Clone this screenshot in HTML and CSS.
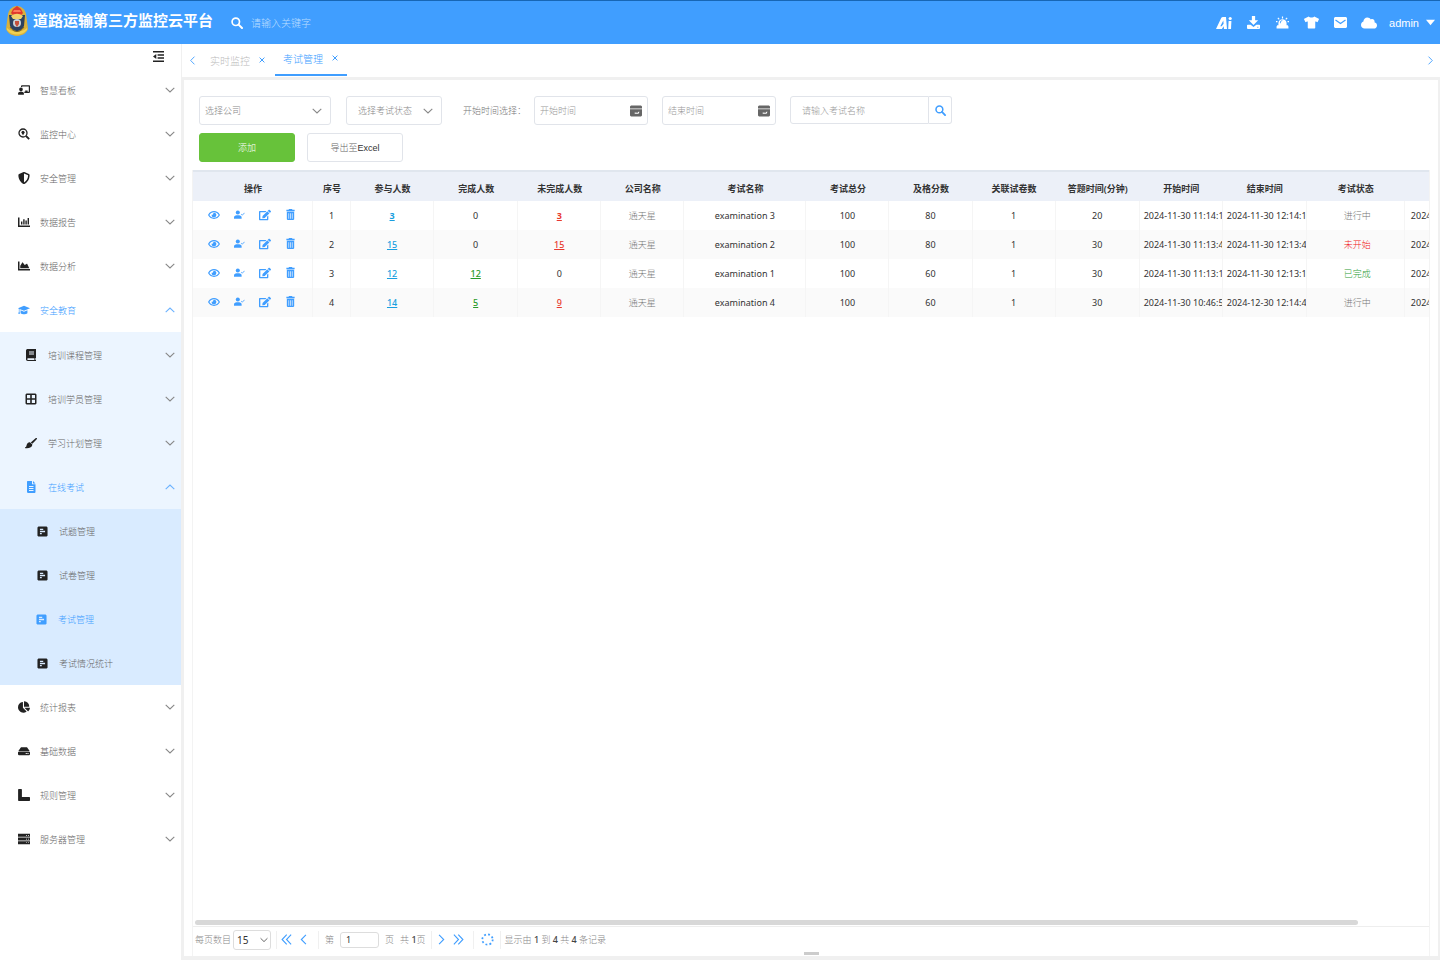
FILE: index.html
```html
<!DOCTYPE html>
<html lang="zh-CN">
<head>
    <meta charset="utf-8">
    <title>道路运输第三方监控云平台</title>
    <link rel="stylesheet" href="styles.css">
</head>
<body>

<svg class="sprite" aria-hidden="true">
    <symbol id="i-down" viewBox="0 0 10 6"><path d="M.7.8 5 5 9.300.8" fill="none" stroke="currentColor" stroke-width="1.100"/></symbol>
    <symbol id="i-left" viewBox="0 0 6 10"><path d="M5.200.7 1 5l4.200 4.300" fill="none" stroke="currentColor"/></symbol>
    <symbol id="i-right" viewBox="0 0 6 10"><path d="M.8.7 5 5 .8 9.300" fill="none" stroke="currentColor"/></symbol>
    <symbol id="i-first" viewBox="0 0 10 10"><path d="M5.200.5 1 5l4.200 4.500M9.200.5 5 5l4.200 4.500" fill="none" stroke="currentColor"/></symbol>
    <symbol id="i-last" viewBox="0 0 10 10"><path d="M.8.5 5 5 .8 9.500M4.800.5 9 5 4.800 9.500" fill="none" stroke="currentColor"/></symbol>
    <symbol id="i-close" viewBox="0 0 6 6"><path d="M.6.6l4.800 4.800M5.400.6.6 5.400" stroke="currentColor"/></symbol>
    <symbol id="i-search" viewBox="0 0 12 12"><circle cx="4.800" cy="4.800" r="3.700" fill="none" stroke="currentColor" stroke-width="1.700"/><path d="M7.600 7.600l3.400 3.400" stroke="currentColor" stroke-width="2" stroke-linecap="round"/></symbol>
    <symbol id="i-zoom" viewBox="0 0 12 12"><circle cx="5" cy="5" r="4" fill="none" stroke="currentColor" stroke-width="1.300"/><circle cx="5" cy="4.300" r="1.500"/><path d="M3.600 4.800h2.800L5 7.400z"/><path d="M8 8l3.200 3.200" stroke="currentColor" stroke-width="1.800"/></symbol>
    <symbol id="i-fold" viewBox="0 0 12 12"><path d="M0 0h12v1.600H0zM5 3.500h7v1.600H5zM5 6.900h7v1.600H5zM0 10.400h12V12H0zM0 6l3.600-2.700v5.400z"/></symbol>
    <symbol id="i-teacher" viewBox="0 0 640 512"><path d="M208 352c-2.390 0-4.780.35-7.060 1.090C187.980 357.300 174.350 360 160 360c-14.350 0-27.980-2.700-40.950-6.910-2.280-.74-4.660-1.090-7.050-1.090C49.940 352-.33 402.480 0 464.620.14 490.880 21.730 512 48 512h224c26.270 0 47.860-21.120 48-47.380.33-62.140-49.940-112.620-112-112.620zm-48-32c53.020 0 96-42.980 96-96s-42.980-96-96-96-96 42.980-96 96 42.980 96 96 96zM592 0H208c-26.470 0-48 22.250-48 49.590V96c23.420 0 45.100 6.780 64 17.800V64h352v288h-64v-64H384v64h-76.240c19.100 16.690 33.120 38.730 39.690 64H592c26.470 0 48-22.250 48-49.590V49.590C640 22.250 618.470 0 592 0z"/></symbol>
    <symbol id="i-shield" viewBox="0 0 512 512"><path d="M466.500 83.700l-192-80a48.150 48.150 0 0 0-36.900 0l-192 80C27.700 91.100 16 108.600 16 128c0 198.500 114.500 335.700 221.500 380.300 11.800 4.900 25.100 4.900 36.900 0C360.100 472.600 496 349.300 496 128c0-19.400-11.700-36.900-29.500-44.300zM256.100 446.300l-.1-381 175.900 73.300c-3.300 151.400-82.100 261.100-175.800 307.700z"/></symbol>
    <symbol id="i-bars" viewBox="0 0 12 12"><path d="M0 1.500h1.500v8H12V11H0zM3 5.500h1.400v3H3zM5.200 3.200h1.400v5.300H5.200zM7.400 4.500h1.400v4H7.400zM9.600 2h1.400v6.500H9.600z"/></symbol>
    <symbol id="i-area" viewBox="0 0 512 512"><path d="M500 384c6.600 0 12 5.400 12 12v40c0 6.600-5.400 12-12 12H12c-6.600 0-12-5.400-12-12V76c0-6.600 5.400-12 12-12h40c6.600 0 12 5.400 12 12v308h436zM372.700 159.500L288 216l-85.300-113.700c-5.100-6.800-15.500-6.300-19.900 1L96 248v104h384l-89.900-187.800c-3.200-6.500-11.400-8.700-17.400-4.700z"/></symbol>
    <symbol id="i-cap" viewBox="0 0 14 12"><path d="M7 1 14 4 7 7 1.700 4.900v3L2.500 10.500H.2L1 7.900V4.500L0 4zM3 6.300l4 1.700 4-1.700v3.400c-2 1.800-6 1.800-8 0z"/></symbol>
    <symbol id="i-book" viewBox="0 0 12 12"><path fill-rule="evenodd" d="M2.800 0H11v9h-.6v2h.6v1H2.800C1.700 12 1 11.300 1 10.300V1.700C1 .7 1.700 0 2.800 0zM4 2.500v1h5v-1zM4 4.500v1h5v-1zM3 9.200c-1 0-1 1.700 0 1.700h6.400V9.200z"/></symbol>
    <symbol id="i-grid" viewBox="0 0 12 12"><path fill-rule="evenodd" d="M1.500.5h9l1 1v9l-1 1h-9l-1-1v-9zM2 2v3.200h3.200V2zm4.800 0v3.200H10V2zM2 6.800V10h3.200V6.800zm4.800 0V10H10V6.800z"/></symbol>
    <symbol id="i-brush" viewBox="0 0 14 12"><path d="M13.800.3c.4.5 0 1-.4 1.500L8.600 7 6.700 5.300 12.300.5c.6-.5 1.100-.6 1.500-.2zM6 5.300l2.600 2.500c-.2 3.400-3.800 4.700-8.300 4.200L0 11c1.700-.2 1.600-1.700 2-3 .6-1.900 2.200-3.100 4-2.700z"/></symbol>
    <symbol id="i-doc" viewBox="0 0 12 12"><path fill-rule="evenodd" d="M2.500 0H7v3.300h3.500v8l-.6.700h-7l-.9-.7V.6zM8 0l2.500 2.500H8zM4 5v.9h4.500V5zM4 7v.9h4.500V7zM4 9v.9h4.500V9z"/></symbol>
    <symbol id="i-form" viewBox="0 0 12 12"><path fill-rule="evenodd" d="M1.500.5h9l1 1v9l-1 1h-9l-1-1v-9zM3.200 3v1.400h3.600V3zM3.200 5.300v1.400h5.600V5.300zM3.200 7.600V9h2V7.600z"/></symbol>
    <symbol id="i-pie" viewBox="0 0 544 512"><path d="M527.790 288H290.500l158.030 158.030c6.040 6.040 15.980 6.530 22.190.68 38.700-36.460 65.320-85.610 73.130-140.860 1.340-9.460-6.510-17.850-16.060-17.850zm-15.830-64.800C503.720 103.740 408.260 8.280 288.800.04 279.680-.59 272 7.100 272 16.240V240h223.770c9.140 0 16.820-7.680 16.190-16.800zM224 288V50.710c0-9.550-8.390-17.400-17.840-16.060C86.990 51.490-4.100 155.600.14 280.370 4.500 408.510 114.830 513.590 243.030 511.980c50.400-.63 96.970-16.870 135.260-44.030 7.900-5.600 8.420-17.230 1.570-24.080L224 288z"/></symbol>
    <symbol id="i-disk" viewBox="0 0 14 12"><path fill-rule="evenodd" d="M3.500 1.500h7L13.600 6H.4zM1 6.700h12l1 .8v2.600l-1 .9H1l-1-.9V7.500zM9 8.200v1.400h1.300V8.200zM11 8.200v1.400h1.300V8.200z"/></symbol>
    <symbol id="i-ruler" viewBox="0 0 12 12"><path d="M.7 0h2.600l.6.6v7.300h7.500l.6.6v2.900l-.6.6H.7l-.6-.6V.6z"/></symbol>
    <symbol id="i-server" viewBox="0 0 12 12"><path fill-rule="evenodd" d="M0 .8h12v3H0zM0 4.500h12v3H0zM0 8.200h12v3H0zM8 2v.7h1V2zm2 0v.7h1V2zM8 5.700v.7h1v-.7zm2 0v.7h1v-.7zM8 9.400v.7h1v-.7zm2 0v.7h1v-.7z"/></symbol>
    <symbol id="i-ai" viewBox="0 0 16 13"><path fill-rule="evenodd" d="M5.200 1.500c.4-.7 1-1 1.800-1h3L11 12.500H8L7.700 9.800 5.900 12.500H0zM7.300 4 4.300 9.800h1.400l1.900-2.500z"/><path d="M12.600 4.500h2.800l-.4 8h-2.800z"/><circle cx="14.200" cy="2" r="1.600"/></symbol>
    <symbol id="i-download" viewBox="0 0 12 12"><path fill-rule="evenodd" d="M4.500 0h3v4h2.800L6 8.200 1.700 4h2.800zM.6 8h2.800L6 10.200 8.600 8h2.800l.6.6v2.800l-.6.600H.6l-.6-.6V8.600zM9.500 10v.8h1V10z"/></symbol>
    <symbol id="i-alarm" viewBox="0 0 14 13"><path fill-rule="evenodd" d="M2.600 9.500V7c0-5.500 8.800-5.500 8.800 0v2.500h1.300l.7 1.200V13H.6v-2.300l.7-1.200zM4.200 7.300h.9c0-1.500.5-2.100 1.700-2.300v-.9C5 4.300 4.200 5.300 4.200 7.300z"/><path d="M7 0v2.200M2 1.500l1.500 1.600M12 1.500l-1.500 1.600M0 5.500h1.600M14 5.500h-1.600" stroke="currentColor" stroke-width="1.300"/></symbol>
    <symbol id="i-shirt" viewBox="0 0 640 512"><path d="M631.200 96.500L436.500 0C416.400 27.800 371.900 47.200 320 47.200S223.600 27.800 203.500 0L8.800 96.500c-7.900 4-11.100 13.600-7.200 21.500l57.200 114.500c4 7.900 13.600 11.100 21.500 7.200l56.600-27.700c10.600-5.200 23 2.500 23 14.400V480c0 17.700 14.300 32 32 32h256c17.700 0 32-14.300 32-32V226.300c0-11.800 12.400-19.600 23-14.400l56.600 27.700c7.900 4 17.500.8 21.500-7.200L638.300 118c4-7.900.8-17.600-7.100-21.500z"/></symbol>
    <symbol id="i-mail" viewBox="0 0 13 11"><path d="M1 0h11l1 1v9l-1 1H1l-1-1V1z"/><path d="M1.500 3l5 3.500 5-3.500" fill="none" stroke="#409eff" stroke-width="1.200"/></symbol>
    <symbol id="i-cloud" viewBox="0 0 640 512"><path d="M537.600 226.600c4.100-10.700 6.400-22.400 6.400-34.600 0-53-43-96-96-96-19.700 0-38.100 6-53.300 16.200C367 64.200 315.300 32 256 32c-88.400 0-160 71.600-160 160 0 2.700.1 5.400.2 8.100C40.200 219.800 0 273.200 0 336c0 79.500 64.500 144 144 144h368c70.700 0 128-57.300 128-128 0-61.900-44-113.600-102.400-125.400z"/></symbol>
    <symbol id="i-caret" viewBox="0 0 10 6"><path d="M0 0h10L5 6z"/></symbol>
    <symbol id="i-date" viewBox="0 0 12 12"><path fill-rule="evenodd" d="M1 .5h10l1 1v2H0v-2zM0 4.300h12v6.200l-1 1H1l-1-1zM4.700 7.500v1.300h3.800l1-2h-1.100l-.7 1z"/></symbol>
    <symbol id="i-eye" viewBox="0 0 14 10"><path d="M.8 5C3.500-.1 10.500-.1 13.200 5 10.500 10.100 3.500 10.100.8 5z" fill="none" stroke="currentColor" stroke-width="1.400"/><path d="M7 2.300a2.700 2.700 0 1 1-2.600 2c.9.7 2.100 0 1.700-1.200z"/></symbol>
    <symbol id="i-user" viewBox="0 0 13 10"><circle cx="4.500" cy="2.700" r="2.400"/><path d="M0 10V8.600C0 7 1.300 5.900 3 5.900h3c1.700 0 3 1.100 3 2.700V10z"/><path d="M8.500 4.600l1.300 1.200L12.500 3" fill="none" stroke="currentColor" stroke-width="1"/></symbol>
    <symbol id="i-edit" viewBox="0 0 576 512"><path d="M402.600 83.200l90.200 90.200c3.800 3.800 3.800 10 0 13.800L274.400 405.600l-92.800 10.300c-12.400 1.400-22.900-9.100-21.500-21.500l10.300-92.800L388.800 83.200c3.800-3.800 10-3.800 13.800 0zm162-22.900l-48.800-48.800c-15.200-15.200-39.900-15.200-55.200 0l-35.400 35.400c-3.800 3.800-3.800 10 0 13.800l90.200 90.200c3.800 3.800 10 3.800 13.800 0l35.400-35.400c15.200-15.300 15.200-40 0-55.200zM384 346.200V448H64V128h229.800c3.200 0 6.200-1.300 8.500-3.500l40-40c7.600-7.600 2.200-20.500-8.500-20.500H48C21.500 64 0 85.500 0 112v352c0 26.500 21.500 48 48 48h352c26.500 0 48-21.500 48-48V306.200c0-10.700-12.900-16-20.500-8.500l-40 40c-2.200 2.300-3.500 5.300-3.500 8.500z"/></symbol>
    <symbol id="i-trash" viewBox="0 0 10 12"><path fill-rule="evenodd" d="M3.300 0h3.400l.4.900H9.500v1.500H.5V.9h2.400zM1 3.100h8v8.100l-.8.800H1.800l-.8-.8zM2.800 4.500v6h.7v-6zM4.650 4.500v6h.7v-6zM6.500 4.500v6h.7v-6z"/></symbol>
    <symbol id="i-refresh" viewBox="0 0 14 14"><circle cx="7" cy="7" r="5.600" fill="none" stroke="currentColor" stroke-width="1.900" stroke-dasharray="2 2.398"/></symbol>
</svg>

<header class="topbar">
    <svg class="logo" viewBox="0 0 24 32" aria-hidden="true">
        <path d="M3 9C4 4 8 1 12 1s8 3 9 8l2 15c-2 5-7 7-11 7S3 29 1 24z" fill="#d9b13c"/>
        <path d="M4 10h16l-1 11c-2 4-5 5-7 5s-5-1-7-5z" fill="#2c4260"/>
        <path d="M12 1l4 3 2 4c-2 4-10 4-12 0l2-4z" fill="#e13a2c"/>
        <path d="M9 5h6l1 2H8z" fill="#ff7a5c"/>
        <path d="M6 11c4-3 8-3 12 0l-2 3H8z" fill="#f2d46c"/>
        <circle cx="12" cy="18" r="4" fill="#c9d2d6"/>
        <path d="M10 16h4v3l-2 3-2-3z" fill="#c5513c"/>
        <path d="M2 23c6 5 14 5 20 0v2c-5 6-15 6-20 0z" fill="#f0d052"/>
        <path d="M5 22c4 6 10 6 14 0" fill="none" stroke="#7c6420"/>
    </svg>
    <h1>道路运输第三方监控云平台</h1>
    <label class="keyword">
        <svg class="icon s12" aria-hidden="true"><use href="#i-search"/></svg>
        <input type="text" placeholder="请输入关键字" aria-label="关键字">
    </label>
    <nav class="tools">
        <button type="button" aria-label="AI"><svg class="icon s16"><use href="#i-ai"/></svg></button>
        <button type="button" aria-label="下载"><svg class="icon s13"><use href="#i-download"/></svg></button>
        <button type="button" aria-label="报警"><svg class="icon s13"><use href="#i-alarm"/></svg></button>
        <button type="button" aria-label="主题"><svg class="icon s15"><use href="#i-shirt"/></svg></button>
        <button type="button" aria-label="消息"><svg class="icon s13"><use href="#i-mail"/></svg></button>
        <button type="button" aria-label="云"><svg class="icon s16"><use href="#i-cloud"/></svg></button>
        <button type="button" class="account">admin <svg class="icon s9"><use href="#i-caret"/></svg></button>
    </nav>
</header>

<div class="layout">
    <aside class="sidebar">
        <div class="fold"><button type="button" aria-label="收起菜单"><svg class="icon s11"><use href="#i-fold"/></svg></button></div>
        <nav>
            <a class="item" href="#"><svg class="icon s12"><use href="#i-teacher"/></svg><span>智慧看板</span><svg class="arrow"><use href="#i-down"/></svg></a>
            <a class="item" href="#"><svg class="icon s12"><use href="#i-zoom"/></svg><span>监控中心</span><svg class="arrow"><use href="#i-down"/></svg></a>
            <a class="item" href="#"><svg class="icon s12"><use href="#i-shield"/></svg><span>安全管理</span><svg class="arrow"><use href="#i-down"/></svg></a>
            <a class="item" href="#"><svg class="icon s12"><use href="#i-bars"/></svg><span>数据报告</span><svg class="arrow"><use href="#i-down"/></svg></a>
            <a class="item" href="#"><svg class="icon s12"><use href="#i-area"/></svg><span>数据分析</span><svg class="arrow"><use href="#i-down"/></svg></a>
            <a class="item active open" href="#"><svg class="icon s12"><use href="#i-cap"/></svg><span>安全教育</span><svg class="arrow"><use href="#i-down"/></svg></a>
            <div class="sub">
                <a class="item" href="#"><svg class="icon s12"><use href="#i-book"/></svg><span>培训课程管理</span><svg class="arrow"><use href="#i-down"/></svg></a>
                <a class="item" href="#"><svg class="icon s12"><use href="#i-grid"/></svg><span>培训学员管理</span><svg class="arrow"><use href="#i-down"/></svg></a>
                <a class="item" href="#"><svg class="icon s12"><use href="#i-brush"/></svg><span>学习计划管理</span><svg class="arrow"><use href="#i-down"/></svg></a>
                <a class="item active open" href="#"><svg class="icon s12"><use href="#i-doc"/></svg><span>在线考试</span><svg class="arrow"><use href="#i-down"/></svg></a>
                <div class="leaf">
                    <a class="item" href="#"><svg class="icon s11"><use href="#i-form"/></svg><span>试题管理</span></a>
                    <a class="item" href="#"><svg class="icon s11"><use href="#i-form"/></svg><span>试卷管理</span></a>
                    <a class="item active" href="#"><svg class="icon s11"><use href="#i-form"/></svg><span>考试管理</span></a>
                    <a class="item" href="#"><svg class="icon s11"><use href="#i-form"/></svg><span>考试情况统计</span></a>
                </div>
            </div>
            <a class="item" href="#"><svg class="icon s12"><use href="#i-pie"/></svg><span>统计报表</span><svg class="arrow"><use href="#i-down"/></svg></a>
            <a class="item" href="#"><svg class="icon s12"><use href="#i-disk"/></svg><span>基础数据</span><svg class="arrow"><use href="#i-down"/></svg></a>
            <a class="item" href="#"><svg class="icon s12"><use href="#i-ruler"/></svg><span>规则管理</span><svg class="arrow"><use href="#i-down"/></svg></a>
            <a class="item" href="#"><svg class="icon s12"><use href="#i-server"/></svg><span>服务器管理</span><svg class="arrow"><use href="#i-down"/></svg></a>
        </nav>
    </aside>

    <main class="main">
        <div class="tabs">
            <button type="button" class="tab-nav" aria-label="向左"><svg class="icon s9"><use href="#i-left"/></svg></button>
            <a class="tab" href="#">实时监控 <svg class="icon s6"><use href="#i-close"/></svg></a>
            <a class="tab current" href="#">考试管理 <svg class="icon s6"><use href="#i-close"/></svg></a>
            <button type="button" class="tab-nav last" aria-label="向右"><svg class="icon s9"><use href="#i-right"/></svg></button>
        </div>

        <section class="panel">
            <form class="filters">
                <div class="line">
                    <div class="field company">
                        <select aria-label="选择公司"><option>选择公司</option></select>
                        <svg class="arrow"><use href="#i-down"/></svg>
                    </div>
                    <div class="field state">
                        <select aria-label="选择考试状态"><option>选择考试状态</option></select>
                        <svg class="arrow"><use href="#i-down"/></svg>
                    </div>
                    <label class="range" for="start">开始时间选择：</label>
                    <div class="field date">
                        <input id="start" type="text" placeholder="开始时间">
                        <svg class="icon s12"><use href="#i-date"/></svg>
                    </div>
                    <div class="field date">
                        <input type="text" placeholder="结束时间" aria-label="结束时间">
                        <svg class="icon s12"><use href="#i-date"/></svg>
                    </div>
                    <div class="search">
                        <input type="text" placeholder="请输入考试名称" aria-label="考试名称">
                        <button type="button" aria-label="搜索"><svg class="icon s11"><use href="#i-search"/></svg></button>
                    </div>
                </div>
                <div class="line actions">
                    <button type="button" class="btn add">添加</button>
                    <button type="button" class="btn">导出至<b>Excel</b></button>
                </div>
            </form>

            <div class="grid">
                <div class="grid-body">
                    <table>
                        <colgroup>
                            <col class="c-op"><col class="c-no"><col class="c-n"><col class="c-t"><col class="c-n"><col class="c-n"><col class="c-name"><col class="c-n"><col class="c-n"><col class="c-n"><col class="c-t"><col class="c-n"><col class="c-t"><col class="c-state"><col class="c-last">
                        </colgroup>
                        <thead>
                            <tr><th>操作</th><th>序号</th><th>参与人数</th><th>完成人数</th><th>未完成人数</th><th>公司名称</th><th>考试名称</th><th>考试总分</th><th>及格分数</th><th>关联试卷数</th><th>答题时间(分钟)</th><th>开始时间</th><th>结束时间</th><th>考试状态</th><th></th></tr>
                        </thead>
                        <tbody>
                            <tr>
                                <td><div class="ops"><a href="#" aria-label="查看"><svg class="icon s12"><use href="#i-eye"/></svg></a><a href="#" aria-label="人员"><svg class="icon s11"><use href="#i-user"/></svg></a><a href="#" aria-label="编辑"><svg class="icon s12"><use href="#i-edit"/></svg></a><a href="#" aria-label="删除"><svg class="icon s11"><use href="#i-trash"/></svg></a></div></td>
                                <td>1</td><td><a class="all strong" href="#">3</a></td><td>0</td><td><a class="todo strong" href="#">3</a></td><td class="cn">通天星</td><td>examination 3</td><td>100</td><td>80</td><td>1</td><td>20</td><td class="time">2024-11-30 11:14:1</td><td class="time">2024-11-30 12:14:1</td><td class="status">进行中</td><td class="more">2024</td>
                            </tr>
                            <tr>
                                <td><div class="ops"><a href="#" aria-label="查看"><svg class="icon s12"><use href="#i-eye"/></svg></a><a href="#" aria-label="人员"><svg class="icon s11"><use href="#i-user"/></svg></a><a href="#" aria-label="编辑"><svg class="icon s12"><use href="#i-edit"/></svg></a><a href="#" aria-label="删除"><svg class="icon s11"><use href="#i-trash"/></svg></a></div></td>
                                <td>2</td><td><a class="all" href="#">15</a></td><td>0</td><td><a class="todo" href="#">15</a></td><td class="cn">通天星</td><td>examination 2</td><td>100</td><td>80</td><td>1</td><td>30</td><td class="time">2024-11-30 11:13:4</td><td class="time">2024-11-30 12:13:4</td><td class="status wait">未开始</td><td class="more">2024</td>
                            </tr>
                            <tr>
                                <td><div class="ops"><a href="#" aria-label="查看"><svg class="icon s12"><use href="#i-eye"/></svg></a><a href="#" aria-label="人员"><svg class="icon s11"><use href="#i-user"/></svg></a><a href="#" aria-label="编辑"><svg class="icon s12"><use href="#i-edit"/></svg></a><a href="#" aria-label="删除"><svg class="icon s11"><use href="#i-trash"/></svg></a></div></td>
                                <td>3</td><td><a class="all" href="#">12</a></td><td><a class="done" href="#">12</a></td><td>0</td><td class="cn">通天星</td><td>examination 1</td><td>100</td><td>60</td><td>1</td><td>30</td><td class="time">2024-11-30 11:13:1</td><td class="time">2024-11-30 12:13:1</td><td class="status over">已完成</td><td class="more">2024</td>
                            </tr>
                            <tr>
                                <td><div class="ops"><a href="#" aria-label="查看"><svg class="icon s12"><use href="#i-eye"/></svg></a><a href="#" aria-label="人员"><svg class="icon s11"><use href="#i-user"/></svg></a><a href="#" aria-label="编辑"><svg class="icon s12"><use href="#i-edit"/></svg></a><a href="#" aria-label="删除"><svg class="icon s11"><use href="#i-trash"/></svg></a></div></td>
                                <td>4</td><td><a class="all" href="#">14</a></td><td><a class="done" href="#">5</a></td><td><a class="todo" href="#">9</a></td><td class="cn">通天星</td><td>examination 4</td><td>100</td><td>60</td><td>1</td><td>30</td><td class="time">2024-11-30 10:46:5</td><td class="time">2024-12-30 12:14:4</td><td class="status">进行中</td><td class="more">2024</td>
                            </tr>
                        </tbody>
                    </table>
                </div>
                <div class="hbar"><div class="thumb"></div></div>
                <div class="pager">
                    <label for="size">每页数目</label>
                    <div class="size">
                        <select id="size"><option>15</option></select>
                        <svg class="arrow"><use href="#i-down"/></svg>
                    </div>
                    <div class="group">
                        <button type="button" aria-label="首页"><svg class="icon s11"><use href="#i-first"/></svg></button>
                        <button type="button" aria-label="上一页"><svg class="icon s11"><use href="#i-left"/></svg></button>
                    </div>
                    <div class="group pages">
                        <label for="page">第</label>
                        <input id="page" type="text" value="1">
                        <span>页</span>
                        <span>共 <b>1</b>页</span>
                    </div>
                    <div class="group">
                        <button type="button" aria-label="下一页"><svg class="icon s11"><use href="#i-right"/></svg></button>
                        <button type="button" aria-label="末页"><svg class="icon s11"><use href="#i-last"/></svg></button>
                    </div>
                    <div class="group reload">
                        <button type="button" aria-label="刷新"><svg class="icon s13"><use href="#i-refresh"/></svg></button>
                    </div>
                    <div class="group total"><span>显示由 <b>1</b> 到 <b>4</b> 共 <b>4</b> 条记录</span></div>
                </div>
            </div>
            <div class="handle"></div>
        </section>
    </main>
</div>

</body>
</html>
```
FILE: styles.css
```css
* {
    box-sizing: border-box;
}
body {
    margin: 0;
    height: 100vh;
    display: flex;
    flex-direction: column;
    overflow: hidden;
    background: #fff;
    color: #666;
    font-family: "Noto Sans", "Noto Sans CJK SC", sans-serif;
    font-size: 9px;
    font-weight: 300;
}
button, input, select {
    font: inherit;
    color: inherit;
    margin: 0;
    padding: 0;
    border: 0;
    background: none;
    appearance: none;
    outline: none;
}
button {
    display: flex;
    align-items: center;
    justify-content: center;
}
a {
    color: inherit;
    text-decoration: none;
}
::placeholder {
    color: #999;
    opacity: 1;
}

/* icons */
.sprite {
    display: none;
}
.icon {
    display: block;
    flex: none;
    fill: currentColor;
}
.s6 { width: 6px; height: 6px; }
.s9 { width: 9px; height: 9px; }
.s11 { width: 11px; height: 11px; }
.s12 { width: 12px; height: 12px; }
.s13 { width: 13px; height: 13px; }
.s15 { width: 15px; height: 13px; }
.s16 { width: 16px; height: 14px; }
.arrow {
    flex: none;
    width: 10px;
    height: 6px;
    color: #888;
}

/* header */
.topbar {
    display: flex;
    align-items: center;
    flex: none;
    height: 44px;
    padding: 0 5px;
    background: #409eff;
    border-top: 1px solid #1766b5;
    color: #fff;
}
.logo {
    width: 24px;
    height: 32px;
    margin-right: 4px;
    margin-bottom: 4px;
}
.topbar h1 {
    margin: 0 18px 5px 0;
    font-size: 15px;
    font-weight: 700;
    line-height: 22px;
}
.keyword {
    display: flex;
    align-items: center;
    gap: 8px;
}
.keyword input {
    width: 120px;
    height: 20px;
    font-size: 10px;
}
.keyword ::placeholder {
    color: #b8dcff;
}
.tools {
    display: flex;
    align-items: center;
    gap: 3px;
    margin-left: auto;
}
.tools button {
    width: 26px;
    height: 26px;
}
.tools .account {
    width: auto;
    gap: 7px;
    margin-left: 4px;
    font-family: "Liberation Sans", sans-serif;
    font-size: 11px;
    font-weight: 400;
}

.layout {
    display: flex;
    flex: 1;
    min-height: 0;
}

/* left menu */
.sidebar {
    flex: none;
    width: 181px;
    overflow: hidden;
}
.fold {
    display: flex;
    justify-content: flex-end;
    height: 24px;
    padding-right: 17px;
    color: #222;
}
.item {
    display: flex;
    align-items: center;
    height: 44px;
    padding: 0 6px 0 18px;
}
.item span {
    flex: 1;
    margin-left: 10px;
}
.item .icon {
    color: #222;
}
.item.active, .item.active .icon {
    color: #409eff;
}
.item.active .arrow {
    color: #6bb2ff;
}
.item.open .arrow {
    transform: rotate(180deg);
}
.sub {
    padding-top: 1px;
    background: #ecf5ff;
}
.sub .item {
    padding-left: 25px;
}
.sub .item span {
    margin-left: 11px;
}
.leaf {
    background: #d9ebff;
}
.leaf .item {
    padding-left: 37px;
}
.leaf .item.active {
    padding-left: 36px;
}

/* tabs */
.main {
    display: flex;
    flex: 1;
    flex-direction: column;
    min-width: 0;
    padding: 0 2px 4px 3px;
    background: #f0f0f0;
}
.tabs {
    display: flex;
    flex: none;
    height: 33px;
    margin: 0 -2px 3px -3px;
    background: #fff;
    border-left: 1px solid #f0f0f0;
    color: #409eff;
}
.tab-nav {
    width: 20px;
}
.tab-nav.last {
    margin-left: auto;
}
.tab {
    display: flex;
    align-items: center;
    gap: 9px;
    height: 32px;
    padding: 0 8px;
    font-size: 10px;
    color: #bbb;
}
.tab .icon {
    color: #409eff;
}
.tab.current {
    margin-left: 2px;
    border-bottom: 2px solid #409eff;
    padding: 0 9px 2px 8px;
    color: #409eff;
}

/* content */
.panel {
    display: flex;
    flex: 1;
    flex-direction: column;
    min-height: 0;
    padding: 16px 8px 0;
    background: #fff;
    position: relative;
}
.filters {
    padding: 0 7px 8px;
}
.line {
    display: flex;
    align-items: center;
    gap: 14px;
}
.field {
    display: flex;
    align-items: center;
    height: 29px;
    border: 1px solid #e1e4ea;
    border-radius: 3px;
    color: #888;
}
.field select, .field input {
    flex: 1;
    min-width: 0;
    height: 27px;
    padding-left: 5px;
}
.field .arrow {
    margin: 0 8px 0 -18px;
    pointer-events: none;
}
.company {
    width: 132px;
}
.state {
    width: 96px;
    margin-left: 1px;
}
.state select {
    padding-left: 11px;
}
.range {
    margin: 0 -6px 0 7px;
    color: #777;
}
.date {
    width: 114px;
}
.date .icon {
    margin-right: 5px;
    color: #666;
}
.search {
    display: flex;
    height: 28px;
    margin-bottom: 1px;
}
.search input {
    width: 139px;
    padding-left: 11px;
    border: 1px solid #e1e4ea;
    border-radius: 3px 0 0 3px;
}
.search button {
    width: 23px;
    border: 1px solid #e1e4ea;
    border-left: 0;
    border-radius: 0 3px 3px 0;
    color: #409eff;
}
.actions {
    gap: 12px;
    margin-top: 8px;
}
.btn {
    width: 96px;
    height: 29px;
    border: 1px solid #e1e4ea;
    border-radius: 3px;
}
.btn b {
    font-family: "Liberation Sans", sans-serif;
    font-weight: 400;
    color: #333;
}
.btn.add {
    background: #67c23a;
    border-color: #67c23a;
    color: #fff;
}

/* table */
.grid {
    display: flex;
    flex: 1;
    flex-direction: column;
    min-height: 0;
    border: 1px solid #f3f3f3;
    border-width: 0 1px;
}
.grid-body {
    flex: 1;
    overflow: hidden;
}
table {
    width: 1306px;
    table-layout: fixed;
    border-collapse: separate;
    border-spacing: 0;
    color: #333;
    font-weight: 400;
}
.c-op { width: 120px; }
.c-no { width: 38px; }
.c-n { width: 83px; }
.c-t { width: 84px; }
.c-name { width: 122px; }
.c-state { width: 98px; }
.c-last { width: 94px; }
th {
    height: 31px;
    padding: 3px 0 0;
    background: #ecf0f8;
    border-top: 2px solid #e0e6ee;
    font-weight: 600;
}
td {
    height: 29px;
    padding: 0 0 1px;
    border-right: 1px solid #f5f5f5;
    text-align: center;
    white-space: nowrap;
    overflow: hidden;
}
tbody tr:nth-child(even) td {
    background: #fafafa;
}
td.time {
    padding-left: 4px;
    text-align: left;
}
td.more {
    padding-left: 6px;
    text-align: left;
}
.ops {
    display: flex;
    gap: 14px;
    padding-left: 15px;
    color: #409eff;
}
.cn, .status {
    padding: 0;
    color: #777;
    font-weight: 300;
}
.status {
    padding-left: 4px;
}
.wait { color: #f02020; }
.over { color: #2fa03a; }
.all, .done, .todo {
    text-decoration: underline;
    font-weight: 500;
}
.all { color: #189fe0; }
.done { color: #2a9a2a; }
.todo { color: #e83a30; }
.strong { font-weight: 700; }

.hbar {
    flex: none;
    padding: 0 71px 1px 2px;
}
.thumb {
    height: 5px;
    border-radius: 3px;
    background: #d8d8d8;
}

/* paging */
.pager {
    display: flex;
    align-items: center;
    flex: none;
    height: 30px;
    padding: 0 0 4px 2px;
    border-top: 1px solid #eee;
    color: #888;
}
.pager b {
    color: #444;
    font-weight: 500;
}
.size {
    display: flex;
    align-items: center;
    width: 38px;
    height: 20px;
    margin: 0 5px 0 2px;
    border: 1px solid #ddd;
    border-radius: 3px;
}
.size select {
    flex: 1;
    min-width: 0;
    padding-left: 3px;
    font-size: 10px;
    font-weight: 400;
    color: #333;
}
.size .arrow {
    width: 8px;
    margin: 0 2px 0 -10px;
    color: #555;
    pointer-events: none;
}
.group {
    display: flex;
    align-items: center;
    gap: 6px;
    height: 18px;
    padding: 0 9px 0 4px;
    border-left: 1px solid #f0f0f0;
}
.group button {
    color: #409eff;
}
.pages {
    padding: 0 5px 0 6px;
}
.pages input {
    width: 39px;
    height: 16px;
    padding-left: 5px;
    border: 1px solid #ddd;
    border-radius: 3px;
    font-weight: 400;
    color: #333;
}
.reload {
    padding: 0 6px 0 7px;
}
.handle {
    position: absolute;
    left: 50%;
    bottom: 1px;
    width: 15px;
    height: 3px;
    margin-left: -7px;
    background: #ccc;
}
```
